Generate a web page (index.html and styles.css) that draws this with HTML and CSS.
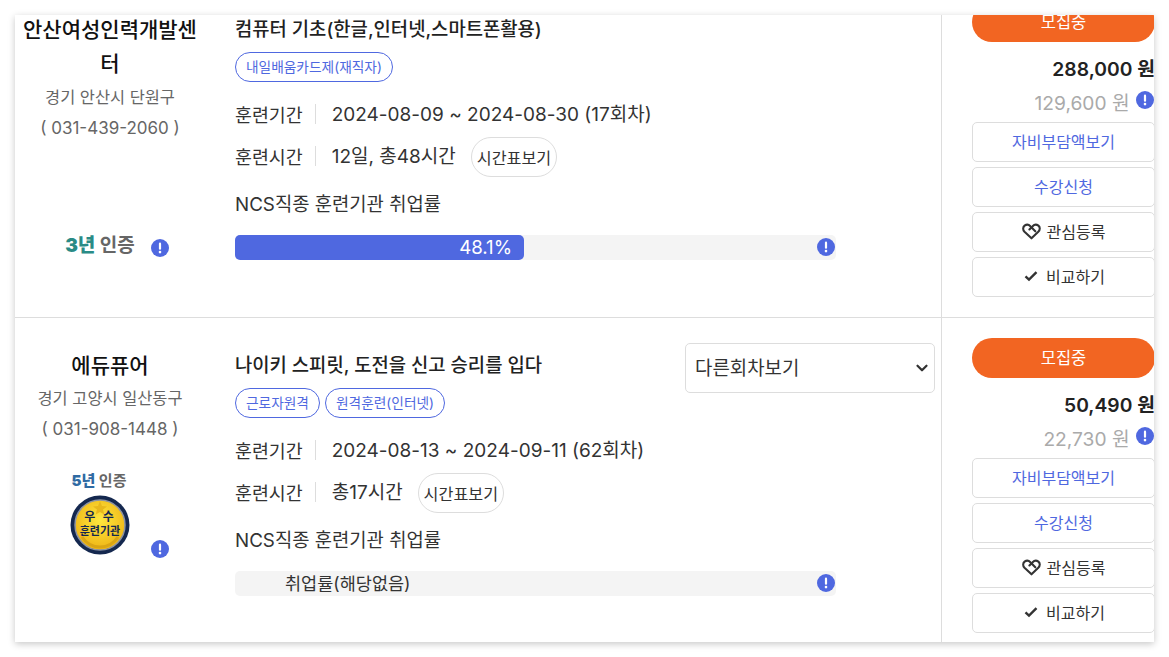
FILE: index.html
```html
<!DOCTYPE html>
<html lang="ko">
<head>
    <meta charset="UTF-8">
    <meta name="viewport" content="width=device-width, initial-scale=1.0">
    <title>훈련과정 검색결과</title>
    <link rel="stylesheet" href="styles.css">
</head>
<body>
    <svg class="icon-defs" aria-hidden="true">
        <symbol id="icon-info" viewBox="0 0 18 18">
            <circle cx="9" cy="9" r="9" fill="#4f68e0"/>
            <rect x="7.9" y="3.6" width="2.2" height="7.2" rx="1.1" fill="#fff"/>
            <circle cx="9" cy="13.1" r="1.3" fill="#fff"/>
        </symbol>
        <symbol id="icon-heart" viewBox="0 0 20 18">
            <path d="M10 16.2 2.6 9.2C.6 7.2.8 4.3 2.7 2.8 4.6 1.300 7.200 1.600 8.800 3.400L14 8.800M10 16.200l7.200-7C19.300 7.200 19.200 4.300 17.300 2.800 15.400 1.300 12.800 1.600 11.200 3.400L7.800 6.800" fill="none" stroke="#333" stroke-width="2.200" stroke-linejoin="round" stroke-linecap="round"/>
        </symbol>
        <symbol id="icon-check" viewBox="0 0 14 12">
            <path d="M1.500 6.300 5 9.600 12.500 2.200" fill="none" stroke="#333" stroke-width="2.400"/>
        </symbol>
    </svg>

    <div class="result-card">
        <div class="result-list">
            <!-- 첫번째 과정 -->
            <div class="course-row">
                <div class="course-org">
                    <strong class="org-name">안산여성인력개발센터</strong>
                    <p class="org-addr">경기 안산시 단원구</p>
                    <p class="org-tel">( 031-439-2060 )</p>
                    <div class="org-cert org-cert-low">
                        <span class="cert-label cert-green"><b>3년</b> 인증</span>
                        <svg class="info-icon cert-info"><use href="#icon-info"/></svg>
                    </div>
                </div>
                <div class="course-main">
                    <h3 class="course-title">컴퓨터 기초(한글,인터넷,스마트폰활용)</h3>
                    <div class="course-tags">
                        <span class="tag">내일배움카드제(재직자)</span>
                    </div>
                    <div class="info-line">
                        <span class="info-label">훈련기간</span>
                        <span class="info-value">2024-08-09 ~ 2024-08-30 (17회차)</span>
                    </div>
                    <div class="info-line info-time">
                        <span class="info-label">훈련시간</span>
                        <span class="info-value">12일, 총48시간</span>
                        <button class="btn-timetable">시간표보기</button>
                    </div>
                    <p class="rate-title">NCS직종 훈련기관 취업률</p>
                    <div class="rate-bar">
                        <div class="rate-fill" style="width: 48.1%">48.1%</div>
                        <svg class="info-icon rate-info"><use href="#icon-info"/></svg>
                    </div>
                </div>
                <div class="course-side">
                    <button class="btn-status">모집중</button>
                    <p class="price">288,000 원</p>
                    <p class="price-self">129,600 원 <svg class="info-icon"><use href="#icon-info"/></svg></p>
                    <div class="side-buttons">
                        <button class="btn-side btn-blue">자비부담액보기</button>
                        <button class="btn-side btn-blue">수강신청</button>
                        <button class="btn-side"><svg class="heart-icon"><use href="#icon-heart"/></svg>관심등록</button>
                        <button class="btn-side btn-compare"><svg class="check-icon"><use href="#icon-check"/></svg>비교하기</button>
                    </div>
                </div>
            </div>

            <!-- 두번째 과정 -->
            <div class="course-row">
                <div class="course-org">
                    <strong class="org-name">에듀퓨어</strong>
                    <p class="org-addr">경기 고양시 일산동구</p>
                    <p class="org-tel">( 031-908-1448 )</p>
                    <div class="org-cert">
                        <span class="cert-label cert-blue"><b>5년</b> 인증</span>
                        <svg class="medal" viewBox="0 0 60 60">
                            <defs>
                                <radialGradient id="gold" cx="50%" cy="40%" r="60%">
                                    <stop offset="0" stop-color="#ffe83f"/>
                                    <stop offset="1" stop-color="#eeb415"/>
                                </radialGradient>
                            </defs>
                            <circle cx="30" cy="30" r="29.500" fill="#14284f"/>
                            <circle cx="30" cy="30" r="25" fill="url(#gold)" stroke="#8d94a3" stroke-width="1.500"/>
                            <path d="M30 6l2 5 5 .4-4 3.200 1.400 5L30 17l-4.400 2.600 1.400-5-4-3.200 5-.4z" fill="#e8b81c"/>
                            <path d="M12 42c4 6 10 10 18 10s14-4 18-10" fill="none" stroke="#d9a514" stroke-width="3"/>
                            <text class="medal-top" x="30" y="26" text-anchor="middle">우 수</text>
                            <text class="medal-bottom" x="30" y="40" text-anchor="middle">훈련기관</text>
                        </svg>
                        <svg class="info-icon cert-info cert-info-medal"><use href="#icon-info"/></svg>
                    </div>
                </div>
                <div class="course-main">
                    <h3 class="course-title">나이키 스피릿, 도전을 신고 승리를 입다</h3>
                    <select class="round-select">
                        <option>다른회차보기</option>
                    </select>
                    <div class="course-tags">
                        <span class="tag">근로자원격</span>
                        <span class="tag">원격훈련(인터넷)</span>
                    </div>
                    <div class="info-line">
                        <span class="info-label">훈련기간</span>
                        <span class="info-value">2024-08-13 ~ 2024-09-11 (62회차)</span>
                    </div>
                    <div class="info-line info-time">
                        <span class="info-label">훈련시간</span>
                        <span class="info-value">총17시간</span>
                        <button class="btn-timetable">시간표보기</button>
                    </div>
                    <p class="rate-title">NCS직종 훈련기관 취업률</p>
                    <div class="rate-bar">
                        <span class="rate-none">취업률(해당없음)</span>
                        <svg class="info-icon rate-info"><use href="#icon-info"/></svg>
                    </div>
                </div>
                <div class="course-side">
                    <button class="btn-status">모집중</button>
                    <p class="price">50,490 원</p>
                    <p class="price-self">22,730 원 <svg class="info-icon"><use href="#icon-info"/></svg></p>
                    <div class="side-buttons">
                        <button class="btn-side btn-blue">자비부담액보기</button>
                        <button class="btn-side btn-blue">수강신청</button>
                        <button class="btn-side"><svg class="heart-icon"><use href="#icon-heart"/></svg>관심등록</button>
                        <button class="btn-side btn-compare"><svg class="check-icon"><use href="#icon-check"/></svg>비교하기</button>
                    </div>
                </div>
            </div>
        </div>
    </div>
</body>
</html>
```

FILE: styles.css
```css
* {
    box-sizing: border-box;
}

html, body {
    height: 100%;
    margin: 0;
    overflow: hidden;
}

body {
    padding: 15px;
    background: #fff;
    color: #333;
    font-family: Inter, "Noto Sans CJK KR", sans-serif;
    font-size: 18px;
}

p, h3 {
    margin: 0;
}

button, select {
    font-family: inherit;
}

.icon-defs {
    display: none;
}

/* Carte */
.result-card {
    width: 1139px;
    height: 627px;
    overflow: hidden;
    background: #fff;
    box-shadow: 0 2px 7px rgba(0,0,0,0.22);
}

/* la liste est deja scrollee de 33px */
.result-list {
    margin-top: -33px;
}

.course-row {
    display: grid;
    grid-template-columns: 190px 737px 1fr;
    height: 336px;
    border-bottom: 1px solid #ddd;
}

/* Colonne organisme */
.course-org {
    padding-top: 30.5px;
    text-align: center;
}

.org-name {
    display: block;
    font-size: 21px;
    font-weight: 500;
    line-height: 34.5px;
    color: #111;
}

.org-addr, .org-tel {
    font-size: 16.4px;
    line-height: 31px;
    color: #666;
}

.org-tel {
    font-size: 17px;
}

.org-cert {
    position: relative;
    margin-top: 25px;
    height: 92px;
}

.org-cert-low {
    margin-top: 86px;
}

.cert-label {
    display: block;
    font-size: 15px;
    font-weight: 700;
    line-height: 24px;
    color: #666;
}

.cert-green {
    font-size: 19px;
    padding-right: 20px;
    line-height: 32px;
}

.cert-green b {
    color: #2a8b86;
}

.cert-blue {
    font-size: 15px;
    line-height: 22px;
    padding-right: 22px;
}

.cert-blue b {
    color: #2f6aa3;
}

.medal {
    display: block;
    width: 60px;
    height: 60px;
    margin: 3px 0 0 55px;
}

.medal-top, .medal-bottom {
    font-family: "Noto Sans CJK KR", sans-serif;
    font-weight: 700;
    fill: #14284f;
}

.medal-top {
    font-size: 12px;
    letter-spacing: 2px;
}

.medal-bottom {
    font-size: 11px;
}

.info-icon {
    width: 18px;
    height: 18px;
    margin-left: 1px;
    vertical-align: 1px;
}

.cert-info {
    position: absolute;
    left: 136px;
    top: 9px;
    margin-left: 0;
}

.cert-info-medal {
    top: 70px;
}

/* Colonne principale */
.course-main {
    position: relative;
    padding: 31px 6px 0 30px;
    border-right: 1px solid #ddd;
}

.course-title {
    font-size: 18.8px;
    font-weight: 500;
    line-height: 34px;
    color: #222;
}

.round-select {
    position: absolute;
    top: 25px;
    right: 6px;
    width: 250px;
    height: 50px;
    padding: 0 9px;
    border: 1px solid #ddd;
    border-radius: 5px;
    background: #fff url("data:image/svg+xml,%3Csvg xmlns='http://www.w3.org/2000/svg' viewBox='0 0 16 16'%3E%3Cpath fill='none' stroke='%23333' stroke-linecap='round' stroke-linejoin='round' stroke-width='3' d='m2 5 6 6 6-6'/%3E%3C/svg%3E") no-repeat right 4px center / 16px 12px;
    color: #333;
    font-size: 18.9px;
    appearance: none;
}

.course-tags {
    display: flex;
    gap: 5px;
    margin-top: 5px;
}

.tag {
    height: 30px;
    padding: 0 10px;
    border: 1px solid #4f68e0;
    border-radius: 15px;
    color: #4f68e0;
    font-size: 13.7px;
    line-height: 28px;
}

.info-line {
    display: flex;
    align-items: center;
    height: 30px;
    margin-top: 17px;
    font-size: 19px;
    color: #333;
}

.info-label {
    height: 20px;
    margin-right: 16px;
    padding: 2px 12px 0 0;
    border-right: 1px solid #ddd;
    font-size: 18.4px;
    line-height: 18px;
}

.info-value {
    padding-bottom: 4px;
}

.info-time {
    height: 40px;
    margin-top: 8px;
}

.info-time .info-label {
    margin-bottom: 2px;
}

.info-time .info-value {
    padding-bottom: 6px;
}

.btn-timetable {
    height: 40px;
    margin-left: 15px;
    padding: 0 5px;
    border: 1px solid #ddd;
    border-radius: 20px;
    background: #fff;
    color: #333;
    font-size: 16.2px;
}

.rate-title {
    margin-top: 13px;
    font-size: 18.8px;
    line-height: 30px;
    color: #333;
}

.rate-bar {
    position: relative;
    width: 601px;
    height: 25px;
    margin-top: 15px;
    border-radius: 5px;
    background: #f4f4f4;
}

.rate-fill {
    height: 25px;
    padding-right: 12px;
    border-radius: 5px;
    background: #4f68e0;
    color: #fff;
    font-size: 18.7px;
    line-height: 25px;
    text-align: right;
}

.rate-none {
    display: block;
    padding-left: 50px;
    font-size: 17.5px;
    line-height: 25px;
}

.rate-info {
    position: absolute;
    top: 3px;
    right: 1px;
}

/* Colonne droite */
.course-side {
    padding: 20px 0 0 30px;
}

.btn-status {
    display: block;
    width: 183px;
    height: 40px;
    padding: 0 0 2px;
    border: none;
    border-radius: 20px;
    background: #f26522;
    color: #fff;
    font-size: 16.5px;
}

.price {
    margin-top: 12px;
    font-size: 19.3px;
    font-weight: 600;
    line-height: 30px;
    color: #222;
    text-align: right;
}

.price-self {
    margin-top: 4px;
    padding-right: 1px;
    font-size: 19.2px;
    line-height: 30px;
    color: #aaa;
    text-align: right;
}

.side-buttons {
    display: flex;
    flex-direction: column;
    gap: 5px;
    margin-top: 4px;
}

.btn-side {
    display: flex;
    align-items: center;
    justify-content: center;
    width: 183px;
    height: 40px;
    padding: 0 0 2px;
    border: 1px solid #ddd;
    border-radius: 5px;
    background: #fff;
    color: #333;
    font-size: 16px;
}

.btn-compare {
    padding-left: 2px;
}

.btn-blue {
    color: #4f68e0;
}

.heart-icon {
    width: 19px;
    height: 17px;
    margin-right: 6px;
}

.check-icon {
    width: 14px;
    height: 12px;
    margin-right: 8px;
}
```
